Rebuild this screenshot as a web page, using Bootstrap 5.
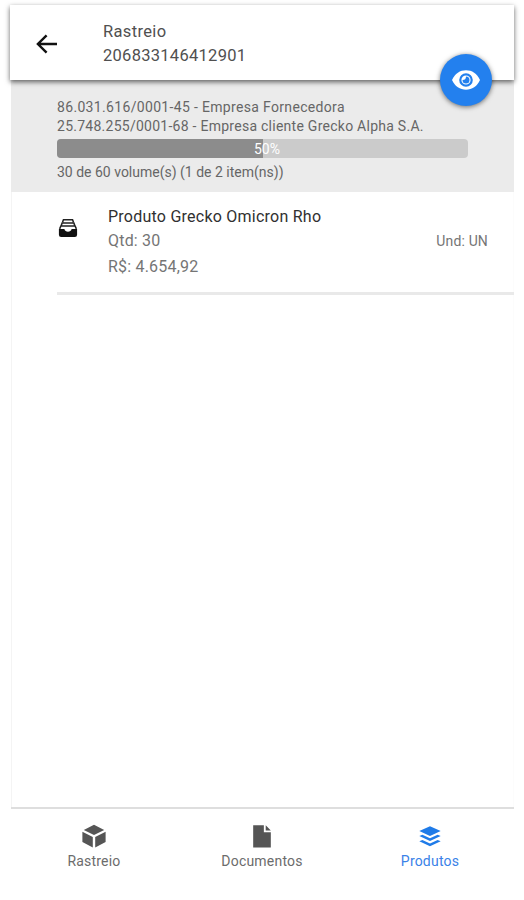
<!DOCTYPE html>
<html lang="pt-BR">
<head>
<meta charset="utf-8">
<meta name="viewport" content="width=device-width, initial-scale=1">
<title>Rastreio</title>
<link href="https://cdn.jsdelivr.net/npm/bootstrap@5.3.0/dist/css/bootstrap.min.css" rel="stylesheet">
<style>
body{font-family:Roboto,"Liberation Sans",sans-serif;background:#fff;color:#4a4a4a}
.phone{height:900px;padding:5px 10px 0 11px}
.appbar{height:75px;padding-left:21px;margin-left:-1px;background:#fff;box-shadow:0 2px 5px rgba(0,0,0,.6);z-index:2}
.back{width:30px;height:30px;margin:3px 0 0 1px}
.titles{margin-left:41px;font-size:16.5px;line-height:24px;color:#505050;margin-top:2px}
.t-name{letter-spacing:.35px}
.t-code{letter-spacing:.28px}
.fab{right:22px;top:48.500px;width:52px;height:52px;background:#2380ee;box-shadow:0 1px 5px rgba(0,0,0,.55)}
.summary{height:112px;padding:18px 46px 0 46px;background:#ebebeb;font-size:14px;line-height:19px;color:#666}
.s-one{letter-spacing:.33px}
.s-two{letter-spacing:.26px}
.s-vol{letter-spacing:0}
.summary>div{height:19px;white-space:nowrap}
.summary>.track{margin:3px 0 5px 0;background:#cbcbcb;border-radius:4px}
.track .progress-bar{background:#8c8c8c}
.pct{font-size:14px;color:#fff;padding-left:9px}
.sheet{border-left:1px solid #f4f4f4;border-right:1px solid #fcfcfc}
.item{margin-left:45px;margin-right:-1px;height:103px;border-bottom:3px solid #e9e9e9;padding-right:26px}
.box-icon{width:20px;height:20px;margin:26px 1px 0 1px}
.lines{margin:13px 0 0 29px;font-size:16px;color:#757575;letter-spacing:.2px}
.p-name{color:#303030;line-height:24px;letter-spacing:.24px}
.p-qty{line-height:24px}
.p-price{line-height:28px}
.unit{font-size:14px;margin-top:39px;line-height:21px;color:#757575;letter-spacing:.15px}
.tabs{height:93px;border-top:2px solid #dedede;padding-top:14px;font-size:14px;letter-spacing:.2px;color:#6c6c6c}
.tab{width:168px;line-height:20px}
.tab:first-child{margin-left:-1px}
.tab svg{width:26px;height:26px;margin-bottom:2px}
.tab-on{color:#3a82e8}
</style>
</head>
<body>
<div class="phone d-flex flex-column">
  <header class="appbar d-flex align-items-center position-relative flex-shrink-0">
    <svg class="back" viewBox="0 0 30 30" fill="none" stroke="#111" stroke-width="2.4"><path d="M25 15H6M14.600 6.300 5.900 15l8.700 8.700"/></svg>
    <div class="titles"><div class="t-name">Rastreio</div><div class="t-code">206833146412901</div></div>
    <div class="fab rounded-circle position-absolute d-flex align-items-center justify-content-center">
      <svg width="30" height="22" viewBox="0 0 30 22"><path d="M1 11C4 4.500 9 1.300 15 1.300S26 4.500 29 11C26 17.500 21 20.700 15 20.700S4 17.500 1 11Z" fill="#fff"/><circle cx="15" cy="11" r="5.700" fill="none" stroke="#2380ee" stroke-width="2.200"/><path d="M15 7.500A3.500 3.500 0 1 1 11.500 11Q15 11 15 7.500Z" fill="#2380ee"/></svg>
    </div>
  </header>
  <section class="summary flex-shrink-0">
    <div><span class="s-one">86.031.616/0001-45 - Empresa Fornecedora</span></div>
    <div><span class="s-two">25.748.255/0001-68 - Empresa cliente Grecko Alpha S.A.</span></div>
    <div class="progress track position-relative">
      <div class="progress-bar" style="width:50%"></div>
      <span class="pct position-absolute top-50 start-50 translate-middle">50%</span>
    </div>
    <div><span class="s-vol">30 de 60 volume(s) (1 de 2 item(ns))</span></div>
  </section>
  <main class="sheet flex-grow-1">
    <div class="item d-flex align-items-start">
      <svg class="box-icon" viewBox="0 0 22 22"><g fill="none" stroke="#222" stroke-width="1.700"><path d="M5 4.500 6 2H16l1 2.500M3.500 8.500l1-3h13l1 3M1.800 12l1.400-3.200h15.600l1.400 3.200"/></g><path d="M1 12h6c.5 2 2 3 4 3s3.500-1 4-3h6v6.500q0 2.500-2.500 2.500H3.500q-2.500 0-2.500-2.500Z" fill="#111"/></svg>
      <div class="lines"><div class="p-name">Produto Grecko Omicron Rho</div><div class="p-qty">Qtd: 30</div><div class="p-price">R$: 4.654,92</div></div>
      <div class="unit ms-auto">Und: UN</div>
    </div>
  </main>
  <nav class="tabs d-flex flex-shrink-0">
    <div class="tab text-center"><svg class="d-block mx-auto" viewBox="0 0 28 28" fill="#555"><path d="M14 2 25 7.500 14 13 3 7.500ZM1.500 9.500 12.700 15V26.500L1.500 20.500ZM26.500 9.500V20.500L15.300 26.500V15Z"/></svg><span>Rastreio</span></div>
    <div class="tab text-center"><svg class="d-block mx-auto" viewBox="0 0 28 28" fill="#555"><path d="M4.500 2.500H16V10H23.500V26.500H4.500ZM18 2.500 23.500 8H18Z"/></svg><span>Documentos</span></div>
    <div class="tab tab-on text-center"><svg class="d-block mx-auto" viewBox="0 0 28 28" fill="#1f7be8"><path d="M14 3.500 25.500 8.700 14 14 2.500 8.700ZM2.500 14l3.300-1.400 8.200 3.700 8.200-3.700 3.300 1.400L14 19.300ZM2.500 19.700l3.300-1.400L14 22l8.200-3.700 3.300 1.400L14 25Z"/></svg><span>Produtos</span></div>
  </nav>
</div>
<script src="https://cdn.jsdelivr.net/npm/bootstrap@5.3.0/dist/js/bootstrap.bundle.min.js"></script>
</body>
</html>
